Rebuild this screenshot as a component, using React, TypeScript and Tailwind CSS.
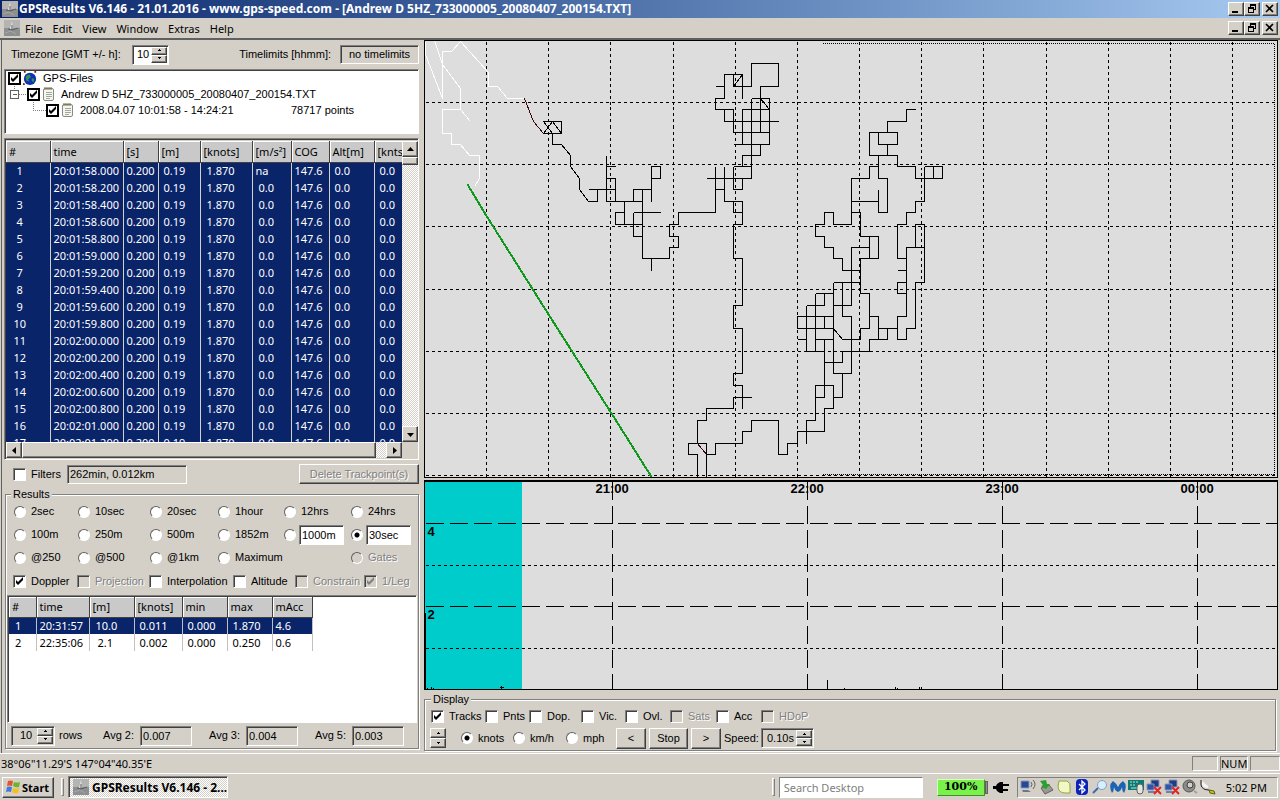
import type { ReactNode } from "react"
import { clsx } from "clsx"

const SUNKEN = "border border-t-[#808080] border-l-[#808080] border-r-white border-b-white shadow-[inset_1px_1px_#404040]"
const RAISED = "bg-[#d4d0c8] border border-t-white border-l-white border-r-[#404040] border-b-[#404040] shadow-[inset_-1px_-1px_#808080]"
const ETCHED = "border border-[#808080] shadow-[1px_1px_0_#fff,inset_1px_1px_0_#fff]"
const DITHER = "bg-[repeating-conic-gradient(#ffffff_0_25%,#d4d0c8_0_50%)] bg-[length:2px_2px]"
const TAHOMA = "font-['Noto_Sans',sans-serif]"

const times = [
    "20:01:58.000", "20:01:58.200", "20:01:58.400", "20:01:58.600", "20:01:58.800", "20:01:59.000",
    "20:01:59.200", "20:01:59.400", "20:01:59.600", "20:01:59.800", "20:02:00.000", "20:02:00.200",
    "20:02:00.400", "20:02:00.600", "20:02:00.800", "20:02:01.000", "20:02:01.200",
]

const trackCols = [
    { head: "#", col: "w-[44px]", cell: "pr-4 text-center" },
    { head: "time", col: "w-[73px]", cell: "pl-[3px]" },
    { head: "[s]", col: "w-[35px]", cell: "pl-[3px]" },
    { head: "[m]", col: "w-[42px]", cell: "pl-[5px]" },
    { head: "[knots]", col: "w-[52px]", cell: "pl-[6px]" },
    { head: "[m/s²]", col: "w-[39px]", cell: "pl-[6px]" },
    { head: "COG", col: "w-[38px]", cell: "pl-[3px]" },
    { head: "Alt[m]", col: "w-[45px]", cell: "pl-[5px]" },
    { head: "[knts", col: "w-[45px]", cell: "pl-[5px]" },
]

const resultCols = [
    { head: "#", col: "w-[27px]", cell: "pl-[6px]" },
    { head: "time", col: "w-[53px]", cell: "pl-[3px]" },
    { head: "[m]", col: "w-[45px]", cell: "pl-[6px]" },
    { head: "[knots]", col: "w-[48px]", cell: "pl-[5px]" },
    { head: "min", col: "w-[45px]", cell: "pl-[5px]" },
    { head: "max", col: "w-[45px]", cell: "pl-[5px]" },
    { head: "mAcc", col: "w-[40px]", cell: "pl-[3px]" },
]

const resultRows = [
    ["1", "20:31:57", "10.0", "0.011", "0.000", "1.870", "4.6"],
    ["2", "22:35:06", "2.1", "0.002", "0.000", "0.250", "0.6"],
]

const gridX = [486, 548, 610, 673, 735, 797, 859, 921, 983, 1046, 1108, 1170, 1232]
const gridY = [102, 164, 226, 289, 351, 413, 475]

const trackBlack = [
    // first leg
    "M543 121H561V133H543L552 121M543 121L552 133M552 121L561 133M552 133V144H561L570 155V166L579 178V189L588 201H597V189",
    "M588 189H615M606 155V201H642M606 166H615M606 178H615V201M624 201V224M624 212H615V224H642M633 201V189H651",
    "M651 201V166H660V178H651M642 189V258H669V247H678V236H669V224H678V212H715V166M633 212H660M633 212V236H642M651 258V270",
    // middle leg
    "M715 86H724M742 98V74H724V98H715V109H733V132H769M724 109V121H778M733 74V86H751V63H778V86H760V132M733 86L742 74",
    "M751 98H769V144H733M760 98L769 109H742V144M751 98V178M760 144V155H742V166M733 166H751M706 178H751M733 166V189H742V178M715 189H724",
    "M724 166V201H742V224H733V258H742V305H733V328H742V373H733V385H742V408M733 201V212H742",
    "M751 397H733V408H706V420H697V443M706 477V443H688V454H697V477M706 454H715V443H742V431H751V420H778V454H787V443H797V431H824V408H833V397H842V373",
    "M806 443V420H815V385H833V397M815 397H824V339M824 362H842V351H869V339H887V328M833 373H851V316H842V282M833 282V373M833 282H860",
    "M824 293V305M815 293H833M806 305H824M806 305V351H824M815 293V351M833 316H797V328H833M824 316V328M797 339H806M815 339H833",
    // right leg
    "M915 109H906V121H887V132M878 132V144H897V132H869V155H897V166H915V178H942V166H924M933 166V178M887 144V155",
    "M878 155V178H887V212H878V189M878 166H869V178H851V224H833V212H824V224H815V236H824V247H833V258H842V270H860M851 201H878",
    "M851 212H860V236H878V258H860V293H869V328H860V339H842L833 328M869 236V258M869 247H851V305H833",
    "M924 166V201H915V212H906V224H897V258H906M915 247V224H924V282H915V328H906V339H897V316H906V247H924M897 270H906M906 282H897V293H906M869 316H878V339M878 328H897",
]

// fast segments, drawn in dark red
const trackRed = ["M524 98L533 121L543 133", "M697 443L706 454"]

const trackWhite = [
    "M434 40L442 64L460 88V109L470 121M425 41V54L442 98V51H451L460 41L488 72V86H497L507 98H524",
    "M460 109H442V133H451V144H460L469 155H479V178L474 186",
]

function AppIcon() {
    return (
        <svg viewBox="0 0 16 16" className="size-4 shrink-0">
            <rect width="16" height="16" fill="#b4b4b2" />
            <rect y="8" width="16" height="8" fill="#8d8f90" />
            <path d="M8 1L6 9h3z" fill="#e6e6e6" />
            <path d="M8 5v5M4 9l4 1 6-2" stroke="#5d5d5d" fill="none" />
            <path d="M1 13l6-2 5 3" stroke="#a4a8aa" fill="none" />
        </svg>
    )
}

function NotesIcon() {
    return (
        <svg viewBox="0 0 13 16" className="h-4 w-[13px] shrink-0">
            <rect x="1.5" y="2.5" width="10" height="12" rx="1.5" fill="#f6f6f0" stroke="#8a8a80" />
            <path d="M3 1v3M5 1v3M7 1v3M9 1v3" stroke="#6d6f45" />
            <path d="M4 6.500h6M4 8.500h6M4 10.500h6M4 12.500h4" stroke="#a5a59c" />
        </svg>
    )
}

function WindowButtons() {
    const button = `${RAISED} h-[14px] w-4 grid place-items-center`
    return (
        <div className="flex pr-0.5">
            <button aria-label="Minimize" className={button}>
                <svg viewBox="0 0 12 10" className="h-[10px] w-3"><path d="M2 7h6v2H2z" /></svg>
            </button>
            <button aria-label="Restore" className={button}>
                <svg viewBox="0 0 12 10" className="h-[10px] w-3" shapeRendering="crispEdges">
                    <path d="M4 0h6v6H8V5h1V2H5v1H4zM2 3h6v6H2zM3 5v3h4V5z" fillRule="evenodd" />
                </svg>
            </button>
            <button aria-label="Close" className={clsx(button, "ml-0.5")}>
                <svg viewBox="0 0 12 10" className="h-[10px] w-3"><path d="M2 1l7 7M9 1L2 8" stroke="#000" strokeWidth="1.600" /></svg>
            </button>
        </div>
    )
}

function Arrow({ dir }: { dir: "up" | "down" | "left" | "right" }) {
    const paths = { up: "M0 5h7L3.500 1z", down: "M0 2h7L3.500 6z", left: "M5 0v7L1 3.500z", right: "M2 0v7L6 3.500z" }
    return <svg viewBox="0 0 7 7" className="size-[7px]"><path d={paths[dir]} /></svg>
}

function SpinButtons() {
    const button = `${RAISED} flex-1 w-full grid place-items-center overflow-hidden`
    return (
        <span className="flex w-4 shrink-0 flex-col self-stretch">
            <button aria-label="Increase" className={button}>
                <svg viewBox="0 0 5 3" className="h-[3px] w-[5px]"><path d="M2 0h1v1h1v1H1V1h1z" /></svg>
            </button>
            <button aria-label="Decrease" className={button}>
                <svg viewBox="0 0 5 3" className="h-[3px] w-[5px]"><path d="M1 0h3v1H3v1H2V1H1z" /></svg>
            </button>
        </span>
    )
}

function Spinner({ label, value, className, field }: { label: string; value: string; className: string; field?: string }) {
    return (
        <span className={clsx(SUNKEN, "flex h-5 items-center p-px", className)}>
            <input aria-label={label} defaultValue={value} className={clsx("min-w-0 flex-1 bg-transparent outline-none", field)} />
            <SpinButtons />
        </span>
    )
}

function Check({ label, checked, disabled }: { label: string; checked?: boolean; disabled?: boolean }) {
    return (
        <label className={clsx("flex items-center gap-[5px] whitespace-nowrap", disabled && "text-[#808080] [text-shadow:1px_1px_#fff]")}>
            <span className="relative size-[13px] shrink-0">
                <input type="checkbox" defaultChecked={checked} disabled={disabled} className={clsx(SUNKEN, "peer block size-[13px] appearance-none bg-white disabled:bg-[#d4d0c8]")} />
                <svg viewBox="0 0 13 13" className="pointer-events-none absolute inset-0 hidden size-[13px] peer-checked:block">
                    <path d="M3 5v3l2 2 5-5V2L5 7z" fill={disabled ? "#808080" : "#000"} />
                </svg>
            </span>
            {label}
        </label>
    )
}

function RadioDot({ name, label, checked, disabled }: { name: string; label?: string; checked?: boolean; disabled?: boolean }) {
    return (
        <input
            type="radio"
            name={name}
            aria-label={label}
            defaultChecked={checked}
            disabled={disabled}
            className="size-3 shrink-0 appearance-none rounded-full border border-t-[#606060] border-l-[#606060] border-r-white border-b-white bg-white checked:bg-[radial-gradient(circle,#000_0_2px,#fff_3px)] disabled:bg-[#d4d0c8]"
        />
    )
}

function Radio({ name, label, checked, disabled }: { name: string; label: string; checked?: boolean; disabled?: boolean }) {
    return (
        <label className={clsx("flex items-center gap-[5px] whitespace-nowrap", disabled && "text-[#808080] [text-shadow:1px_1px_#fff]")}>
            <RadioDot name={name} checked={checked} disabled={disabled} />
            {label}
        </label>
    )
}

function TreeCheck({ label, children }: { label: string; children?: ReactNode }) {
    return (
        <label className="flex h-4 items-center gap-0.5 whitespace-nowrap">
            <span className="relative size-[13px] shrink-0">
                <input type="checkbox" defaultChecked className="peer block size-[13px] appearance-none border-2 border-black bg-white" />
                <svg viewBox="0 0 13 13" className="pointer-events-none absolute inset-0 hidden size-[13px] peer-checked:block">
                    <path d="M3 5v3l2 2 5-5V2L5 7z" />
                </svg>
            </span>
            {children}
            <span className="pl-1">{label}</span>
        </label>
    )
}

function FileTree() {
    return (
        <div className={clsx(SUNKEN, "relative mr-[5px] h-[65px] shrink-0 bg-white pl-[3px]")}>
            <svg className="pointer-events-none absolute top-0 left-0 size-full" shapeRendering="crispEdges">
                <path d="M9.500 14v6M14 24.500h8M28.500 30v10.500h12" stroke="#808080" strokeDasharray="1 1" fill="none" />
                <path d="M5.500 20.500h8v8h-8zM7.500 24.500h4" stroke="#606060" fill="#fff" />
            </svg>
            <TreeCheck label="GPS-Files">
                <svg viewBox="0 0 16 16" className="h-4 w-[14px]">
                    <circle cx="8" cy="9" r="7" fill="#1230b4" />
                    <path d="M4 5l4-1 1 3-3 2 1 3-3-1-1-3zM10 8l3 1-1 4-2-2z" fill="#2c9a4c" />
                    <path d="M1 0h2v2H1zM13 0h2v2h-2zM0 14h2v2H0z" fill="#7a1c14" />
                </svg>
            </TreeCheck>
            <div className="pl-[19px]">
                <TreeCheck label="Andrew D 5HZ_733000005_20080407_200154.TXT"><NotesIcon /></TreeCheck>
            </div>
            <div className="flex items-center pl-[38px]">
                <div className="w-[245px]">
                    <TreeCheck label="2008.04.07 10:01:58 - 14:24:21"><NotesIcon /></TreeCheck>
                </div>
                <span>78717 points</span>
            </div>
        </div>
    )
}

function TrackTable() {
    const button = `${RAISED} size-4 shrink-0 grid place-items-center`
    return (
        <div className={clsx(SUNKEN, "mr-[5px] flex min-h-0 flex-1 flex-col pt-0.5 pb-px pl-px")}>
            <div className="flex min-h-0 flex-1">
                <div className="min-w-0 flex-1 overflow-hidden">
                    <table className={clsx(TAHOMA, "w-[413px] table-fixed border-collapse text-[11px]")}>
                        <colgroup>
                            {trackCols.map((c) => <col key={c.head} className={c.col} />)}
                        </colgroup>
                        <thead>
                            <tr className="h-[21px] bg-[#c9c9c9]">
                                {trackCols.map((c) => (
                                    <th key={c.head} className="border-r border-b border-[#404040] py-0 pl-[3px] text-left font-normal whitespace-nowrap shadow-[inset_1px_1px_#fff]">{c.head}</th>
                                ))}
                            </tr>
                        </thead>
                        <tbody className="bg-[#0a246a] text-white">
                            {times.map((time, i) => (
                                <tr key={time} className="h-[17px]">
                                    {[i + 1, time, "0.200", "0.19", "1.870", i === 0 ? "na" : "0.0", "147.6", "0.0", "0.0"].map((value, c) => (
                                        <td key={c} className={clsx("border-r border-[#d4d0c8] py-0 leading-4 whitespace-nowrap", value === "na" ? "pl-[3px]" : trackCols[c].cell)}>{value}</td>
                                    ))}
                                </tr>
                            ))}
                        </tbody>
                    </table>
                </div>
                <div className={clsx(DITHER, "flex w-4 shrink-0 flex-col")}>
                    <button aria-label="Scroll up" className={button}><Arrow dir="up" /></button>
                    <div className={clsx(RAISED, "h-2")} />
                    <div className="flex-1" />
                    <button aria-label="Scroll down" className={button}><Arrow dir="down" /></button>
                </div>
            </div>
            <div className={clsx(DITHER, "mr-4 flex h-4 shrink-0")}>
                <button aria-label="Scroll left" className={button}><Arrow dir="left" /></button>
                <div className={clsx(RAISED, "flex-1")} />
                <div className="w-[10px]" />
                <button aria-label="Scroll right" className={button}><Arrow dir="right" /></button>
            </div>
        </div>
    )
}

function ResultTable() {
    return (
        <div className={clsx(SUNKEN, "mx-px mt-0.5 h-32 bg-white p-px")}>
            <table className={clsx(TAHOMA, "w-[303px] table-fixed border-collapse text-[11px]")}>
                <colgroup>
                    {resultCols.map((c) => <col key={c.head} className={c.col} />)}
                </colgroup>
                <thead>
                    <tr className="h-5 bg-[#c9c9c9]">
                        {resultCols.map((c) => (
                            <th key={c.head} className="border-r border-b border-[#404040] py-0 pl-[3px] text-left font-normal whitespace-nowrap shadow-[inset_1px_1px_#fff]">{c.head}</th>
                        ))}
                    </tr>
                </thead>
                <tbody>
                    {resultRows.map((row, i) => (
                        <tr key={row[0]} className={clsx("h-[17px]", i === 0 && "bg-[#0a246a] text-white")}>
                            {row.map((value, c) => (
                                <td key={c} className={clsx("border-r border-[#c0c0c0] py-0 leading-4", value === "2.1" ? "pl-2" : resultCols[c].cell)}>{value}</td>
                            ))}
                        </tr>
                    ))}
                </tbody>
            </table>
        </div>
    )
}

function Average({ label, value }: { label: string; value: string }) {
    return (
        <label className="flex items-center gap-[6px]">
            {label}
            <input readOnly defaultValue={value} className={clsx(SUNKEN, "h-5 w-[52px] bg-transparent pl-0.5 outline-none")} />
        </label>
    )
}

function Results() {
    const grid = "grid h-[23px] grid-cols-[64px_72px_68px_66px_67px_1fr] items-center pl-2"
    return (
        <fieldset className={clsx(ETCHED, "mr-[5px] ml-px min-w-0")}>
            <legend className="ml-[5px] h-3 bg-[#d4d0c8] px-0.5 leading-3">Results</legend>
            <div className={grid}>
                {["2sec", "10sec", "20sec", "1hour", "12hrs", "24hrs"].map((l) => <Radio key={l} name="result" label={l} />)}
            </div>
            <div className={grid}>
                {["100m", "250m", "500m", "1852m"].map((l) => <Radio key={l} name="result" label={l} />)}
                <div className="flex items-center gap-[3px]">
                    <RadioDot name="result" label="Custom distance" />
                    <input aria-label="Distance" defaultValue="1000m" className={clsx(SUNKEN, "h-5 w-[45px] bg-white pl-0.5 outline-none")} />
                </div>
                <div className="flex items-center gap-[3px]">
                    <RadioDot name="result" label="Custom time" checked />
                    <input aria-label="Time" defaultValue="30sec" className={clsx(SUNKEN, "h-5 w-[45px] bg-white pl-0.5 outline-none")} />
                </div>
            </div>
            <div className={grid}>
                {["@250", "@500", "@1km", "Maximum"].map((l) => <Radio key={l} name="result" label={l} />)}
                <span />
                <Radio name="result" label="Gates" disabled />
            </div>
            <div className="grid h-6 grid-cols-[64px_72px_84px_62px_69px_1fr] items-center pl-[7px]">
                <Check label="Doppler" checked />
                <Check label="Projection" disabled />
                <Check label="Interpolation" />
                <Check label="Altitude" />
                <Check label="Constrain" disabled />
                <Check label="1/Leg" checked disabled />
            </div>
            <ResultTable />
            <div className="flex h-[25px] items-center pl-[5px]">
                <span className="flex w-[92px] items-center gap-1">
                    <Spinner label="Rows" value="10" className="w-11" field="pl-[7px]" />
                    rows
                </span>
                <div className="flex gap-[17px]">
                    <Average label="Avg 2:" value="0.007" />
                    <Average label="Avg 3:" value="0.004" />
                    <Average label="Avg 5:" value="0.003" />
                </div>
            </div>
        </fieldset>
    )
}

function TrackMap() {
    return (
        <div className="min-h-0 flex-1 border border-black bg-[#dddddd]">
            <svg className="block size-full" shapeRendering="crispEdges" fill="none" stroke="#000">
                <g transform="translate(-424.500 -40.500)">
                    <g strokeDasharray="3 3">
                        {gridX.map((x) => <path key={x} d={`M${x} 41V2000`} />)}
                        {gridY.map((y) => <path key={y} d={`M425 ${y}H4000`} />)}
                    </g>
                    <path d="M822 43H1274V474H822" strokeDasharray="1 1" />
                    {trackWhite.map((d) => <path key={d} d={d} stroke="#fff" />)}
                    {trackBlack.map((d) => <path key={d} d={d} />)}
                    {trackRed.map((d) => <path key={d} d={d} stroke="#3a0808" />)}
                    <path d="M467 184L487 217L550 317L613 416L652 478" stroke="#10991c" strokeWidth="2" />
                </g>
            </svg>
        </div>
    )
}

function SpeedChart() {
    return (
        <div className="mt-0.5 h-[210px] shrink-0 border border-t-2 border-black bg-[#dddddd]">
            <svg className="block size-full" shapeRendering="crispEdges" fill="none" stroke="#000">
                <g transform="translate(-424.500 -481.500)">
                    <rect x="424" y="481" width="97" height="210" fill="#00cccc" stroke="none" />
                    <path d="M425 523H4000M425 606H4000" strokeDasharray="18 6" />
                    <path d="M425 565H4000M425 648H4000" strokeDasharray="3 3" />
                    {[612, 807, 1002, 1197].map((x) => <path key={x} d={`M${x} 481V689`} strokeDasharray="18 6" />)}
                    <path d="M425 612V689M427 687V689M431 686V689M433 687V689M499 687H503M501 685V689M827 679V689M844 687V689M895 686V689M897 687V689M919 686V689M921 686V689" />
                    <g fill="#000" stroke="none" className="font-['Liberation_Sans',sans-serif] text-[13px] font-bold">
                        <text x="595" y="492">21:00</text>
                        <text x="790" y="492">22:00</text>
                        <text x="985" y="492">23:00</text>
                        <text x="1180" y="492">00:00</text>
                        <text x="427" y="535">4</text>
                        <text x="427" y="618">2</text>
                    </g>
                </g>
            </svg>
        </div>
    )
}

function Display() {
    const button = `${RAISED} h-[21px]`
    return (
        <fieldset className={clsx(ETCHED, "mt-0.5 mr-0.5 min-w-0")}>
            <legend className="ml-[6px] h-[14px] bg-[#d4d0c8] px-0.5 leading-[14px]">Display</legend>
            <div className="grid h-5 grid-cols-[54px_44px_52px_44px_45px_46px_45px_1fr] items-center pl-[6px]">
                <Check label="Tracks" checked />
                <Check label="Pnts" />
                <Check label="Dop." />
                <Check label="Vic." />
                <Check label="Ovl." />
                <Check label="Sats" disabled />
                <Check label="Acc" />
                <Check label="HDoP" disabled />
            </div>
            <div className="flex h-6 items-center pl-[5px]">
                <span className="flex h-5"><SpinButtons /></span>
                <div className="ml-[15px] grid grid-cols-[52px_53px_50px]">
                    <Radio name="unit" label="knots" checked />
                    <Radio name="unit" label="km/h" />
                    <Radio name="unit" label="mph" />
                </div>
                <div className="flex gap-[3px]">
                    <button aria-label="Slower" className={clsx(button, "w-[30px]")}>&lt;</button>
                    <button className={clsx(button, "w-[39px]")}>Stop</button>
                    <button aria-label="Faster" className={clsx(button, "w-[30px]")}>&gt;</button>
                </div>
                <span className="w-10 pl-[3px]">Speed:</span>
                <Spinner label="Speed" value="0.10s" className="w-[53px]" field="pl-1" />
            </div>
        </fieldset>
    )
}

function TrayIcon({ children }: { children: ReactNode }) {
    return <svg viewBox="0 0 16 16" className="size-4 shrink-0">{children}</svg>
}

function NetworkDown() {
    return (
        <TrayIcon>
            <path d="M5 1h8v7H5z" fill="#1c3d8c" stroke="#8f98ad" />
            <path d="M1 5h7v6H1z" fill="#2a55b0" stroke="#8f98ad" />
            <path d="M2 12h7v2H2z" fill="#77809a" />
            <path d="M8 8l7 7M15 8l-7 7" stroke="#e02626" strokeWidth="2" />
        </TrayIcon>
    )
}

function Taskbar() {
    return (
        <footer className="flex h-[27px] shrink-0 items-center border-t border-white px-0.5">
            <button className={clsx(RAISED, TAHOMA, "flex h-[21px] w-[52px] items-center gap-px pl-0.5 text-[11px] font-bold")}>
                <svg viewBox="0 0 16 16" className="size-4 shrink-0">
                    <path d="M3 2q2-1 5 0L7 7Q4 6 2 7z" fill="#e8512a" />
                    <path d="M9 3q3 1 6 0l-1 5q-3 1-6-1z" fill="#6bb52c" />
                    <path d="M2 8q2-1 5 0l-1 5q-3-1-5 0z" fill="#3e7be0" />
                    <path d="M8 9q3 1 6 0l-1 5q-3 1-6-1z" fill="#f5c01e" />
                </svg>
                Start
            </button>
            <span className="ml-[7px] h-[18px] w-[3px] border border-t-white border-r-[#808080] border-b-[#808080] border-l-white" />
            <button className={clsx(SUNKEN, DITHER, TAHOMA, "ml-1 flex h-[22px] w-40 items-center gap-[3px] pl-1 text-[12px] font-bold whitespace-nowrap")}>
                <AppIcon />
                GPSResults V6.146 - 2...
            </button>
            <div className="flex-1" />
            <span className="mr-1 h-[18px] w-[3px] border border-t-white border-r-[#808080] border-b-[#808080] border-l-white" />
            <input aria-label="Search Desktop" placeholder="Search Desktop" className={clsx(TAHOMA, "h-[21px] w-36 border border-r-white border-b-white border-t-[#808080] border-l-[#808080] bg-white pl-1 text-[11px] outline-none placeholder:text-[#808080]")} />
            <div className="ml-[14px] flex items-center">
                <span className="grid h-[17px] w-12 place-items-center border border-t-[#d8ffc0] border-r-[#4c8a2c] border-b-[#4c8a2c] border-l-[#d8ffc0] bg-[#7af24c] font-['DejaVu_Serif',serif] text-[11px] leading-3 font-bold">100%</span>
                <span className="h-[13px] w-[3px] border border-[#606060] bg-[#909090]" />
            </div>
            <svg viewBox="0 0 16 14" className="ml-[5px] h-[14px] w-4">
                <path d="M0 6h3l1-2 3-2h3v2h6v2h-6v3h5v2h-5v2H7l-3-2-1-2H0z" />
            </svg>
            <div className="ml-2 flex h-[21px] items-center gap-0.5 border border-t-[#808080] border-r-white border-b-white border-l-[#808080] px-0.5">
                <TrayIcon>
                    <path d="M1 2h8v7H1z" fill="#24489c" stroke="#8f98ad" />
                    <path d="M2 11h6l3 2H3z" fill="#6a7592" />
                    <path d="M11 3q2 2 0 5M13 1q4 4 0 9" stroke="#606060" fill="none" />
                </TrayIcon>
                <TrayIcon>
                    <path d="M3 9l8-3 4 5-8 4z" fill="#9a9a92" stroke="#606060" />
                    <path d="M2 2l6-1 1 4h3l-4 5-5-3 2-1z" fill="#2ca02c" />
                </TrayIcon>
                <TrayIcon>
                    <path d="M3 2h8q4 2 3 6v6H9q-6 0-7-6z" fill="#f3f7c4" stroke="#8aa83c" />
                </TrayIcon>
                <TrayIcon>
                    <rect x="2" width="12" height="16" rx="4" fill="#0a22b8" />
                    <path d="M5 5l6 6-3 3V2l3 3-6 6" stroke="#fff" strokeWidth="1.300" fill="none" />
                </TrayIcon>
                <TrayIcon>
                    <path d="M6 9l-5 5" stroke="#3f68b5" strokeWidth="2" />
                    <circle cx="10" cy="6" r="4.500" fill="#d8eefb" stroke="#7da2cc" />
                </TrayIcon>
                <TrayIcon>
                    <path d="M2 14Q-2 6 3 2q3 2 5 6 2-4 5-6 5 4 1 12-2-2-2-6-1 4-4 5-3-1-4-5 0 4-2 6z" fill="#1b63b3" />
                </TrayIcon>
                <TrayIcon>
                    <rect y="1" width="16" height="10" fill="#0f7a72" />
                    <path d="M2 3h2M5 3h2M8 3h2M2 6h2M5 6h2M3 9h6" stroke="#b7e3df" />
                    <rect x="9" y="5" width="6" height="10" rx="3" fill="#e6e6e0" stroke="#606060" />
                </TrayIcon>
                <NetworkDown />
                <NetworkDown />
                <TrayIcon>
                    <circle cx="7" cy="7" r="6" fill="#8c8c8c" stroke="#5a5a5a" />
                    <circle cx="8" cy="6" r="3" fill="#d4d0c8" stroke="#404040" />
                    <path d="M12 12l3 2" stroke="#a0a0a0" strokeWidth="2" />
                </TrayIcon>
                <TrayIcon>
                    <path d="M1 1v5q1 5 8 5l3 3" stroke="#202020" fill="none" />
                    <path d="M2 2v4q1 3 6 3V7z" fill="#f4f4f4" />
                    <path d="M9 11l5 1 1 3-5-1z" fill="#c9c22a" stroke="#606010" />
                </TrayIcon>
                <span className={clsx(TAHOMA, "px-2 text-[11px] whitespace-nowrap")}>5:02 PM</span>
            </div>
        </footer>
    )
}

export default function App() {
    const panel = "h-[15px] border border-t-[#808080] border-r-white border-b-white border-l-[#808080]"
    return (
        <div className="flex h-screen flex-col overflow-hidden bg-[#d4d0c8] font-['Liberation_Sans',sans-serif] text-[11px] leading-[13px] text-black">
            <header className="flex h-[18px] shrink-0 items-center bg-linear-to-r from-[#0a246a] to-[#a6caf0] pl-0.5">
                <AppIcon />
                <h1 className={clsx(TAHOMA, "flex-1 truncate pl-px text-[12px] leading-4 font-bold text-white")}>
                    GPSResults V6.146 - 21.01.2016 - www.gps-speed.com - [Andrew D 5HZ_733000005_20080407_200154.TXT]
                </h1>
                <WindowButtons />
            </header>
            <nav className={clsx(TAHOMA, "flex h-5 shrink-0 items-center pl-1 text-[11px]")}>
                <AppIcon />
                <div className="flex flex-1 gap-[10px] pl-[5px]">
                    {["File", "Edit", "View", "Window", "Extras", "Help"].map((item) => <button key={item}>{item}</button>)}
                </div>
                <WindowButtons />
            </nav>
            <main className="flex min-h-0 flex-1 border-t-2 border-[#606060]">
                <section className="ml-px flex w-[423px] shrink-0 flex-col border-l border-[#606060] pb-1 pl-0.5">
                    <div className="flex h-[29px] shrink-0 items-center pr-[5px] pl-[7px]">
                        <span className="w-[121px]">Timezone [GMT +/- h]:</span>
                        <Spinner label="Timezone" value="10" className="w-[37px] bg-white" field="pl-[3px]" />
                        <span className="flex-1 pr-[9px] text-right">Timelimits [hhmm]:</span>
                        <button className={clsx(SUNKEN, "h-[19px] w-[79px]")}>no timelimits</button>
                    </div>
                    <FileTree />
                    <div className="h-1 shrink-0" />
                    <TrackTable />
                    <div className="flex h-7 shrink-0 items-center pr-[5px] pl-[9px]">
                        <Check label="Filters" />
                        <input aria-label="Filter result" readOnly defaultValue="262min, 0.012km" className={clsx(SUNKEN, "ml-[6px] h-[19px] w-[120px] bg-transparent pl-0.5 outline-none")} />
                        <button disabled className={clsx(RAISED, "ml-auto h-5 w-[120px] text-[#808080] [text-shadow:1px_1px_#fff]")}>Delete Trackpoint(s)</button>
                    </div>
                    <Results />
                </section>
                <section className="flex min-w-0 flex-1 flex-col pr-0.5 pb-0.5">
                    <TrackMap />
                    <SpeedChart />
                    <Display />
                </section>
            </main>
            <div className="flex h-5 shrink-0 items-center gap-0.5 border-t border-white">
                <span className={clsx(TAHOMA, "flex-1 pl-px")}>38°06"11.29'S 147°04"40.35'E</span>
                <span className={clsx(panel, "w-[26px]")} />
                <span className={clsx(panel, TAHOMA, "w-7 text-center")}>NUM</span>
                <span className={clsx(panel, "w-[30px]")} />
            </div>
            <Taskbar />
        </div>
    )
}
